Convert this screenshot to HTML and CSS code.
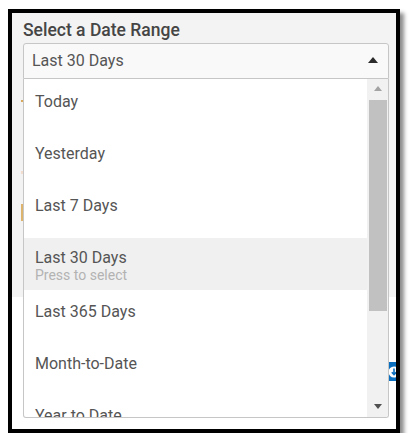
FILE: index.html
```html
<!DOCTYPE html>
<html lang="en">
<head>
<meta charset="utf-8">
<title>Date range</title>
<link rel="stylesheet" href="styles.css">
</head>
<body>
<div class="frame">
  <div class="panel">
    <h2 class="title">Select a Date Range</h2>
    <div class="field">
      <div class="select">
        <span class="select-value">Last 30 Days</span>
        <span class="caret"></span>
      </div>
      <div class="menu">
        <ul class="options">
          <li class="option">Today</li>
          <li class="option">Yesterday</li>
          <li class="option">Last 7 Days</li>
          <li class="option is-active">Last 30 Days<span class="hint">Press to select</span></li>
          <li class="option">Last 365 Days</li>
          <li class="option">Month-to-Date</li>
          <li class="option">Year to Date</li>
        </ul>
        <div class="scrollbar">
          <span class="scroll-btn"><span class="arrow arrow-up"></span></span>
          <span class="thumb"></span>
          <span class="track"></span>
          <span class="scroll-btn"><span class="arrow arrow-down"></span></span>
        </div>
      </div>
    </div>
    <div class="content">
      <div class="filters">
        <span class="chip chip-dot"></span>
        <span class="chip chip-faint"></span>
        <span class="chip chip-bar"></span>
      </div>
      <div class="results">
        <button class="export" type="button">
          <svg width="12" height="12" viewBox="0 0 12 12">
            <circle cx="6" cy="6" r="5.5" fill="#fff"/>
            <path d="M6 2.5v6M3.8 6.3 6 8.6 8.2 6.3" fill="none" stroke="#0b6fc0" stroke-width="1.6"/>
          </svg>
        </button>
      </div>
    </div>
  </div>
</div>
</body>
</html>
```
FILE: styles.css
```css
* {
  box-sizing: border-box;
}

body {
  margin: 0;
  background: #fff;
  font-family: Roboto, "Liberation Sans", Arial, sans-serif;
}

.frame {
  margin: 9px 0 0 8px;
  width: 392px;
  height: 424px;
  border: 4px solid #000;
  background: #f3f3f3;
  box-shadow: 4px 4px 4px rgba(0, 0, 0, 0.45);
}

.panel {
  height: 100%;
  overflow: hidden;
  display: flex;
  flex-direction: column;
}

.title {
  margin: 6px 7px 2px 11px;
  font-size: 17.5px;
  line-height: 22px;
  font-weight: 500;
  color: #454545;
}

.field {
  position: relative;
  margin: 0 7px 0 11px;
  z-index: 2;
}

.select {
  height: 36px;
  display: flex;
  align-items: center;
  justify-content: space-between;
  padding: 0 10px 0 8px;
  border: 1px solid #c6c6c6;
  border-radius: 3px 3px 0 0;
  background: #f9f9f9;
}

.select-value {
  font-size: 16px;
  line-height: 34px;
  color: #555;
}

.caret {
  width: 0;
  height: 0;
  border-left: 5.5px solid transparent;
  border-right: 5.5px solid transparent;
  border-bottom: 6px solid #2b2b2b;
  margin-top: -2px;
}

/* open dropdown list, laid over the page below */
.menu {
  position: absolute;
  top: 36px;
  left: 0;
  right: 0;
  height: 339px;
  display: flex;
  background: #fff;
  border: 1px solid #c6c6c6;
  border-top: 0;
  border-radius: 0 0 3px 3px;
  overflow: hidden;
}

.options {
  flex: 1;
  margin: 0;
  padding: 3px 0 0;
  list-style: none;
  overflow: hidden;
}

.option {
  height: 52px;
  padding: 10px 0 0 11px;
  font-size: 16px;
  line-height: 20px;
  color: #555;
}

.option.is-active {
  background: #f0f0f0;
}

.option.is-active ~ .option {
  padding-top: 12px;
}

.hint {
  display: block;
  font-size: 14px;
  line-height: 14px;
  color: #b3b3b3;
}

.scrollbar {
  width: 21px;
  display: flex;
  flex-direction: column;
  background: #f1f1f1;
}

.scroll-btn {
  height: 21px;
  display: flex;
  align-items: center;
  justify-content: center;
  padding-left: 1px;
}

.arrow {
  width: 0;
  height: 0;
  border-left: 4.5px solid transparent;
  border-right: 4.5px solid transparent;
}

.arrow-up {
  border-bottom: 5px solid #a3a3a3;
  margin-top: -2px;
}

.arrow-down {
  border-top: 5px solid #505050;
  margin-top: -1px;
}

.thumb {
  height: 211px;
  margin: 0 1px 0 2px;
  background: #c1c1c1;
}

.track {
  flex: 1;
}

/* page content underneath the list */
.content {
  flex: 1;
  display: flex;
  flex-direction: column;
}

.filters {
  height: 218px;
  display: flex;
  flex-direction: column;
  align-items: flex-start;
  padding-left: 9px;
}

.chip {
  display: block;
  background: #d9a85a;
}

.chip-dot {
  width: 2px;
  height: 2px;
  margin-top: 21px;
}

.chip-faint {
  width: 2px;
  height: 3px;
  margin-top: 69px;
  background: #f1dccf;
}

.chip-bar {
  width: 2px;
  height: 17px;
  margin-top: 30px;
  background: #dcb46e;
}

.results {
  flex: 1;
  display: flex;
  justify-content: flex-end;
  align-items: flex-start;
  background: #fff;
}

.export {
  margin: 65px -19px 0 0;
  width: 26px;
  height: 19px;
  padding: 0;
  border: 0;
  background: #0b6fc0;
  display: flex;
  align-items: center;
  justify-content: flex-start;
}

.export svg {
  display: block;
  margin-left: -1px;
}
```
